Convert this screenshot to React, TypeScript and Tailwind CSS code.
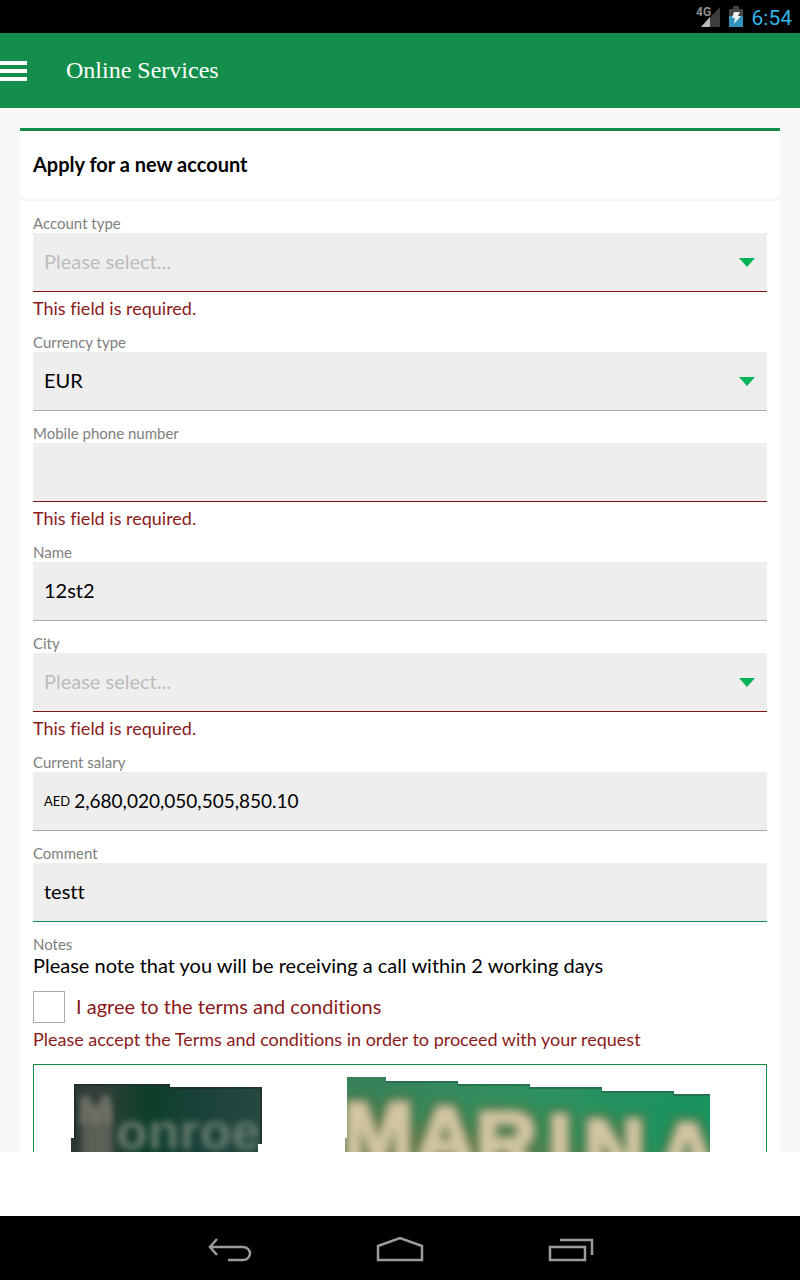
import { useId, type ReactNode } from "react";

const FIELD_BORDER = {
  normal: "border-[#a9a9a9]",
  error: "border-[#841617]",
  active: "border-[#118c4f]",
};

type Tone = keyof typeof FIELD_BORDER;

const LABEL = "block pb-[2px] text-[15px] leading-4 text-[#808080]";
const CONTROL = "h-full w-full appearance-none bg-transparent px-[11px] pb-[2px] text-xl outline-none";

function Field({ id, label, tone = "normal", error, children }: {
  id: string;
  label: string;
  tone?: Tone;
  error?: string;
  children: ReactNode;
}) {
  return (
    <div className="pb-[14px]">
      <label htmlFor={id} className={LABEL}>{label}</label>
      <div className={`relative flex h-[59px] items-center border-b bg-[#eeeeee] ${FIELD_BORDER[tone]}`}>
        {children}
      </div>
      {error && <p className="pt-1 text-lg leading-6 text-[#8b1a1a]">{error}</p>}
    </div>
  );
}

function SelectField({ label, value, error }: { label: string; value?: string; error?: string }) {
  const id = useId();
  return (
    <Field id={id} label={label} error={error} tone={error ? "error" : "normal"}>
      <select id={id} defaultValue={value ?? ""} className={`${CONTROL} ${value ? "text-black" : "text-[#bcbcbc]"}`}>
        <option value="">Please select...</option>
        {value && <option value={value}>{value}</option>}
      </select>
      <svg aria-hidden="true" viewBox="0 0 16 9" className="pointer-events-none absolute right-3 h-[9px] w-4 fill-[#00b457]">
        <path d="M0 0h16L8 9z" />
      </svg>
    </Field>
  );
}

function TextField({ label, value = "", prefix, error, tone = "normal" }: {
  label: string;
  value?: string;
  prefix?: string;
  error?: string;
  tone?: Tone;
}) {
  const id = useId();
  return (
    <Field id={id} label={label} error={error} tone={error ? "error" : tone}>
      {prefix ? (
        <div className="flex h-full w-full items-center gap-1 pb-[2px] pl-[11px]">
          <span className="pt-1 text-[13px]">{prefix}</span>
          <input id={id} defaultValue={value} className="h-full min-w-0 flex-1 bg-transparent text-[19px] outline-none" />
        </div>
      ) : (
        <input id={id} defaultValue={value} className={CONTROL} />
      )}
    </Field>
  );
}

function StatusBar() {
  return (
    <div className="flex h-[33px] shrink-0 items-center justify-end bg-black pr-2 font-['Roboto',sans-serif]">
      <svg aria-label="4G signal" viewBox="0 0 25 24" className="mr-2 h-6 w-[25px]">
        <path d="M24 2v20H5z" fill="#3d3d3d" />
        <path d="M14 12v10H5z" fill="#b9b9b9" />
        <text x="0" y="11" fontSize="12" fontWeight="700" fill="#8c8c8c" stroke="#000" strokeWidth="2" paintOrder="stroke">4G</text>
      </svg>
      <svg aria-label="Battery charging" viewBox="0 0 14 22" className="mr-[9px] h-[22px] w-[14px]">
        <path d="M4 0h6v3h4v7H0V3h4z" fill="#444" />
        <path d="M0 10h14v11H0z" fill="#3192bd" />
        <path d="M5 6h6L9 10h3l-7 8 1-6H3z" fill="#eee" />
      </svg>
      <time className="pt-[2px] text-[21px] leading-8 text-[#33b5e5]">6:54</time>
    </div>
  );
}

const RIGHT_LETTERS = [
  ["M", 309, 96], ["A", 381, 101], ["R", 442, 106], ["I", 514, 108], ["N", 550, 113], ["A", 623, 117],
] as const;

function Captcha() {
  return (
    <div className="mt-[13px] h-40 overflow-hidden border border-[#128c49]">
      <svg role="img" aria-label="Captcha" viewBox="0 0 732 160" className="w-full font-['Liberation_Sans',sans-serif] font-bold">
        <defs>
          <linearGradient id="dark">
            <stop offset="0" stopColor="#2a3635" />
            <stop offset=".15" stopColor="#33403a" />
            <stop offset=".4" stopColor="#0c3f29" />
            <stop offset=".7" stopColor="#1c423c" />
            <stop offset="1" stopColor="#244a40" />
          </linearGradient>
          <linearGradient id="green" x2="1" y2=".15">
            <stop offset="0" stopColor="#38805a" />
            <stop offset=".5" stopColor="#309060" />
            <stop offset="1" stopColor="#179360" />
          </linearGradient>
          <filter id="soft" x="-20%" y="-20%" width="140%" height="140%"><feGaussianBlur stdDeviation="3" /></filter>
          <filter id="haze" x="-20%" y="-40%" width="140%" height="180%"><feGaussianBlur stdDeviation="8" /></filter>
          <filter id="glow" x="-20%" y="-20%" width="140%" height="140%">
            <feGaussianBlur in="SourceGraphic" stdDeviation="4" result="letters" />
            <feMorphology in="SourceAlpha" operator="dilate" radius="5" />
            <feGaussianBlur stdDeviation="6" result="spread" />
            <feFlood floodColor="#66753f" floodOpacity=".75" />
            <feComposite in2="spread" operator="in" result="olive" />
            <feMerge><feMergeNode in="olive" /><feMergeNode in="letters" /></feMerge>
          </filter>
          <clipPath id="leftSign"><path d="M40 19h96v3h92v57h-4v81H37V73h3z" /></clipPath>
          <clipPath id="rightSign"><path d="M313 12h39v4h72v3h72v3h72v4h72v3h36v131H311V73h2z" /></clipPath>
        </defs>
        <g clipPath="url(#leftSign)">
          <path d="M37 12h192v148H37z" fill="url(#dark)" />
          <rect x="48" y="40" width="30" height="90" fill="#6b6c62" opacity=".75" filter="url(#soft)" />
          <g fill="#64786b" filter="url(#soft)">
            <text x="44" y="60" fontSize="42" fill="#75756b">M</text>
            <text x="82" y="84" fontSize="52">onroe</text>
          </g>
          <path d="M38 73h3V20h95v3h91v56" fill="none" stroke="#202b29" strokeWidth="2" opacity=".7" />
        </g>
        <g clipPath="url(#rightSign)">
          <path d="M311 12h366v148H311z" fill="url(#green)" />
          <path d="M300 50l390 55v60H300z" fill="#6d7848" opacity=".55" filter="url(#haze)" />
          <g fill="#d3c6a3" stroke="#d3c6a3" strokeWidth="3" fontSize="84" filter="url(#glow)">
            {RIGHT_LETTERS.map(([letter, x, y]) => <text key={x} x={x} y={y}>{letter}</text>)}
          </g>
          <path d="M352 17h72v3h72v3h72v4h72v3h36" fill="none" stroke="#286a4d" strokeWidth="2" opacity=".8" />
        </g>
      </svg>
    </div>
  );
}

function NavigationBar() {
  const icon = "h-8 w-12 fill-none stroke-[#9b9b9b] stroke-[2.5]";
  return (
    <nav className="flex h-16 shrink-0 items-center justify-center gap-[122px] bg-black pt-[2px]">
      <button type="button" aria-label="Back">
        <svg viewBox="0 0 48 32" className={icon}><path d="M11 6l-7 8 7 8M4 14h33a7 6.5 0 0 1 0 13H22" /></svg>
      </button>
      <button type="button" aria-label="Home">
        <svg viewBox="0 0 48 32" className={icon}><path d="M2 27V13l22-8 22 8v14z" /></svg>
      </button>
      <button type="button" aria-label="Recent apps">
        <svg viewBox="0 0 48 32" className={icon}><path d="M4 14h35v13H4zM14 7h32v15" /></svg>
      </button>
    </nav>
  );
}

export default function App() {
  return (
    <div className="flex h-screen flex-col bg-white font-['Lato',sans-serif] text-black [font-variant-ligatures:none]">
      <StatusBar />
      <header className="flex h-[75px] shrink-0 items-center gap-[39px] bg-[#138f4b] text-white">
        <button type="button" aria-label="Menu">
          <svg viewBox="0 0 27 20" className="h-5 w-[27px] fill-white"><path d="M0 0h27v4H0zM0 8h27v4H0zM0 16h27v4H0z" /></svg>
        </button>
        <h1 className="pb-[2px] font-['Liberation_Serif',serif] text-2xl">Online Services</h1>
      </header>
      <main className="min-h-0 flex-1 overflow-y-auto bg-[#f7f7f7] px-5 pt-5 [scrollbar-width:none]">
        <h2 className="border-t-[3px] border-[#128c49] bg-white px-[13px] pt-[19px] pb-5 text-xl leading-7 font-bold">
          Apply for a new account
        </h2>
        <form className="mt-[3px] bg-white px-[13px] pt-[14px] pb-4">
          <SelectField label="Account type" error="This field is required." />
          <SelectField label="Currency type" value="EUR" />
          <TextField label="Mobile phone number" error="This field is required." />
          <TextField label="Name" value="12st2" />
          <SelectField label="City" error="This field is required." />
          <TextField label="Current salary" prefix="AED" value="2,680,020,050,505,850.10" />
          <TextField label="Comment" value="testt" tone="active" />
          <h3 className={LABEL}>Notes</h3>
          <p className="pb-[2px] text-xl leading-[22px]">Please note that you will be receiving a call within 2 working days</p>
          <label className="mt-[13px] flex items-center gap-[11px] text-xl leading-8 text-[#8b1a1a]">
            <input type="checkbox" className="size-8 appearance-none border border-[#a9a9a9] bg-white" />
            <span className="pb-[2px] leading-[30px]">I agree to the terms and conditions</span>
          </label>
          <p className="pt-1 text-lg leading-6 text-[#8b1a1a]">
            Please accept the Terms and conditions in order to proceed with your request
          </p>
          <Captcha />
        </form>
      </main>
      <div className="h-16 shrink-0 bg-white" />
      <NavigationBar />
    </div>
  );
}
